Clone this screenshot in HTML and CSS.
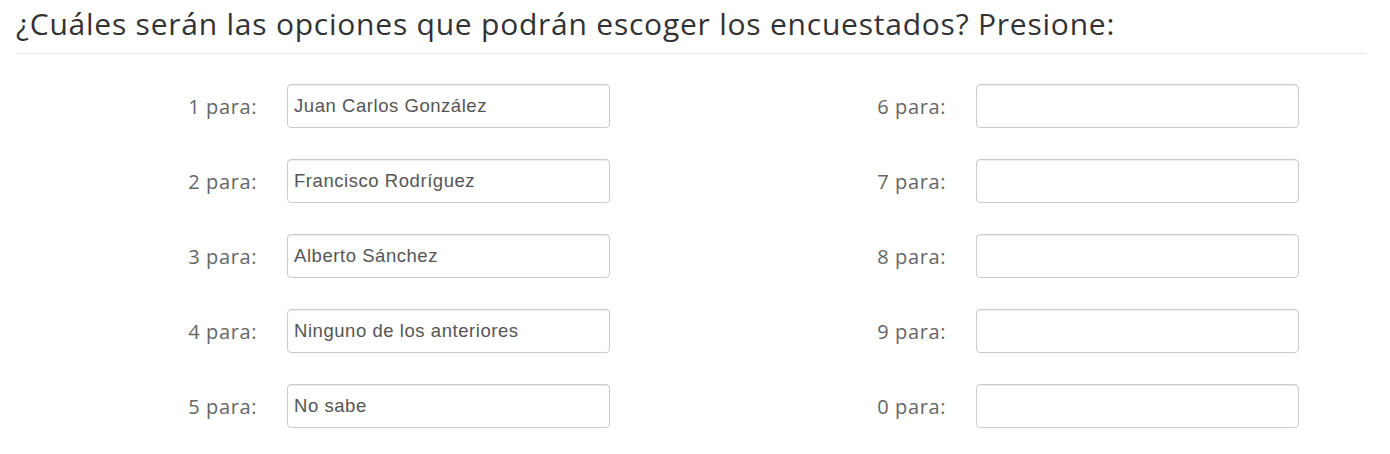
FILE: index.html
```html
<!DOCTYPE html>
<html lang="es">
<head>
    <meta charset="UTF-8">
    <title>Opciones</title>
    <link rel="stylesheet" href="styles.css">
</head>
<body>
    <div class="pregunta">
        <h2 class="titulo">¿Cuáles serán las opciones que podrán escoger los encuestados? Presione:</h2>
        <div class="opciones">
            <div class="columna">
                <div class="fila"><label>1 para:</label><input type="text" value="Juan Carlos González"></div>
                <div class="fila"><label>2 para:</label><input type="text" value="Francisco Rodríguez"></div>
                <div class="fila"><label>3 para:</label><input type="text" value="Alberto Sánchez"></div>
                <div class="fila"><label>4 para:</label><input type="text" value="Ninguno de los anteriores"></div>
                <div class="fila"><label>5 para:</label><input type="text" value="No sabe"></div>
            </div>
            <div class="columna">
                <div class="fila"><label>6 para:</label><input type="text"></div>
                <div class="fila"><label>7 para:</label><input type="text"></div>
                <div class="fila"><label>8 para:</label><input type="text"></div>
                <div class="fila"><label>9 para:</label><input type="text"></div>
                <div class="fila"><label>0 para:</label><input type="text"></div>
            </div>
        </div>
    </div>
</body>
</html>
```

FILE: styles.css
```css
* {
    margin: 0;
    padding: 0;
    box-sizing: border-box;
}

body {
    background: #fff;
    font-family: "Open Sans", sans-serif;
    color: #333;
}

.titulo {
    font-size: 30px;
    font-weight: 400;
    letter-spacing: 0.77px;
    line-height: 36px;
    padding: 6px 0 11px 0;
    margin: 0 24px 0 17px;
    border-bottom: 1px solid #e5e5e5;
    text-indent: -1px;
}

.opciones {
    display: flex;
    padding-top: 30px;
}

.columna {
    width: 689px;
    display: flex;
    flex-direction: column;
    gap: 31px;
}

.fila {
    display: flex;
    align-items: center;
    gap: 30px;
}

.fila label {
    width: 257px;
    text-align: right;
    font-size: 20px;
    letter-spacing: 0.6px;
    color: #666;
}

.fila input {
    width: 323px;
    height: 44px;
    border: 1px solid #ccc;
    border-radius: 4px;
    padding: 0 6px;
    font-family: "Liberation Sans", Arial, sans-serif;
    font-size: 18.5px;
    letter-spacing: 0.55px;
    color: #555;
    box-shadow: inset 0 1px 1px rgba(0, 0, 0, 0.075);
}
```
